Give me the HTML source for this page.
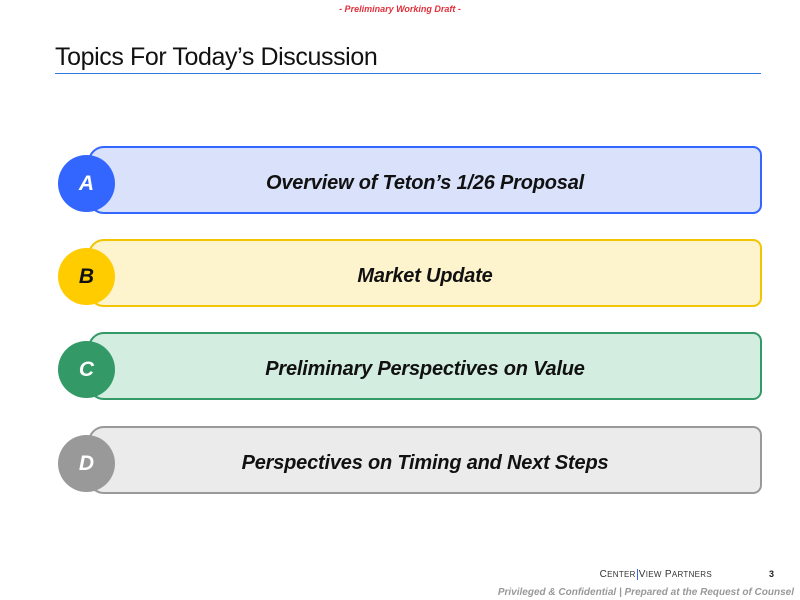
<!DOCTYPE html>
<html><head><meta charset="utf-8"><style>
body{margin:0;width:800px;height:600px;background:#fff;position:relative;overflow:hidden;font-family:"Liberation Sans",sans-serif}
.draft{position:absolute;top:4px;left:0;width:800px;text-align:center;color:#e0303a;font-size:9px;font-style:italic;font-weight:bold}
.title{position:absolute;left:55px;top:43px;font-size:25px;letter-spacing:-0.4px;color:#111}
.rule{position:absolute;left:55px;top:73px;width:706px;height:1px;background:#2f78e0}
.box{position:absolute;left:88px;width:670px;padding-top:6px;box-sizing:content-box;height:58px;border:2px solid;border-radius:9px;border-top-left-radius:16px;border-bottom-left-radius:16px;display:flex;align-items:center;justify-content:center;font-weight:bold;font-style:italic;font-size:20px;letter-spacing:-0.2px;color:#111}
.circ{position:absolute;left:58px;width:57px;height:57px;border-radius:50%;color:#fff;font-weight:bold;font-style:italic;font-size:21px;display:flex;align-items:center;justify-content:center}
.foot1{position:absolute;right:88px;top:569px;font-size:10px;color:#333;letter-spacing:.3px}
.pg{position:absolute;left:769px;top:569px;font-size:9px;font-weight:bold;color:#222}
.foot2{position:absolute;right:6px;top:587px;font-size:10px;font-style:italic;font-weight:bold;color:#999}
</style></head><body>
<div class="draft">- Preliminary Working Draft -</div>
<div class="title">Topics For Today’s Discussion</div>
<div class="rule"></div>
<div class="box" style="top:146px;background:#d9e1fb;border-color:#3366ff">Overview of Teton’s 1/26 Proposal</div>
<div class="circ" style="top:155px;background:#3366ff">A</div>
<div class="box" style="top:239px;background:#fdf3cc;border-color:#f2c500">Market Update</div>
<div class="circ" style="top:248px;background:#ffcc00;color:#111">B</div>
<div class="box" style="top:332px;background:#d3ede0;border-color:#339966">Preliminary Perspectives on Value</div>
<div class="circ" style="top:341px;background:#339966">C</div>
<div class="box" style="top:426px;background:#ebebeb;border-color:#999">Perspectives on Timing and Next Steps</div>
<div class="circ" style="top:435px;background:#999">D</div>
<div class="foot1">C<span style="font-size:8px">ENTER</span><span style="border-left:1px solid #3366ff;margin:0 1px"></span>V<span style="font-size:8px">IEW</span> P<span style="font-size:8px">ARTNERS</span></div>
<div class="pg">3</div>
<div class="foot2">Privileged &amp; Confidential | Prepared at the Request of Counsel</div>
</body></html>
